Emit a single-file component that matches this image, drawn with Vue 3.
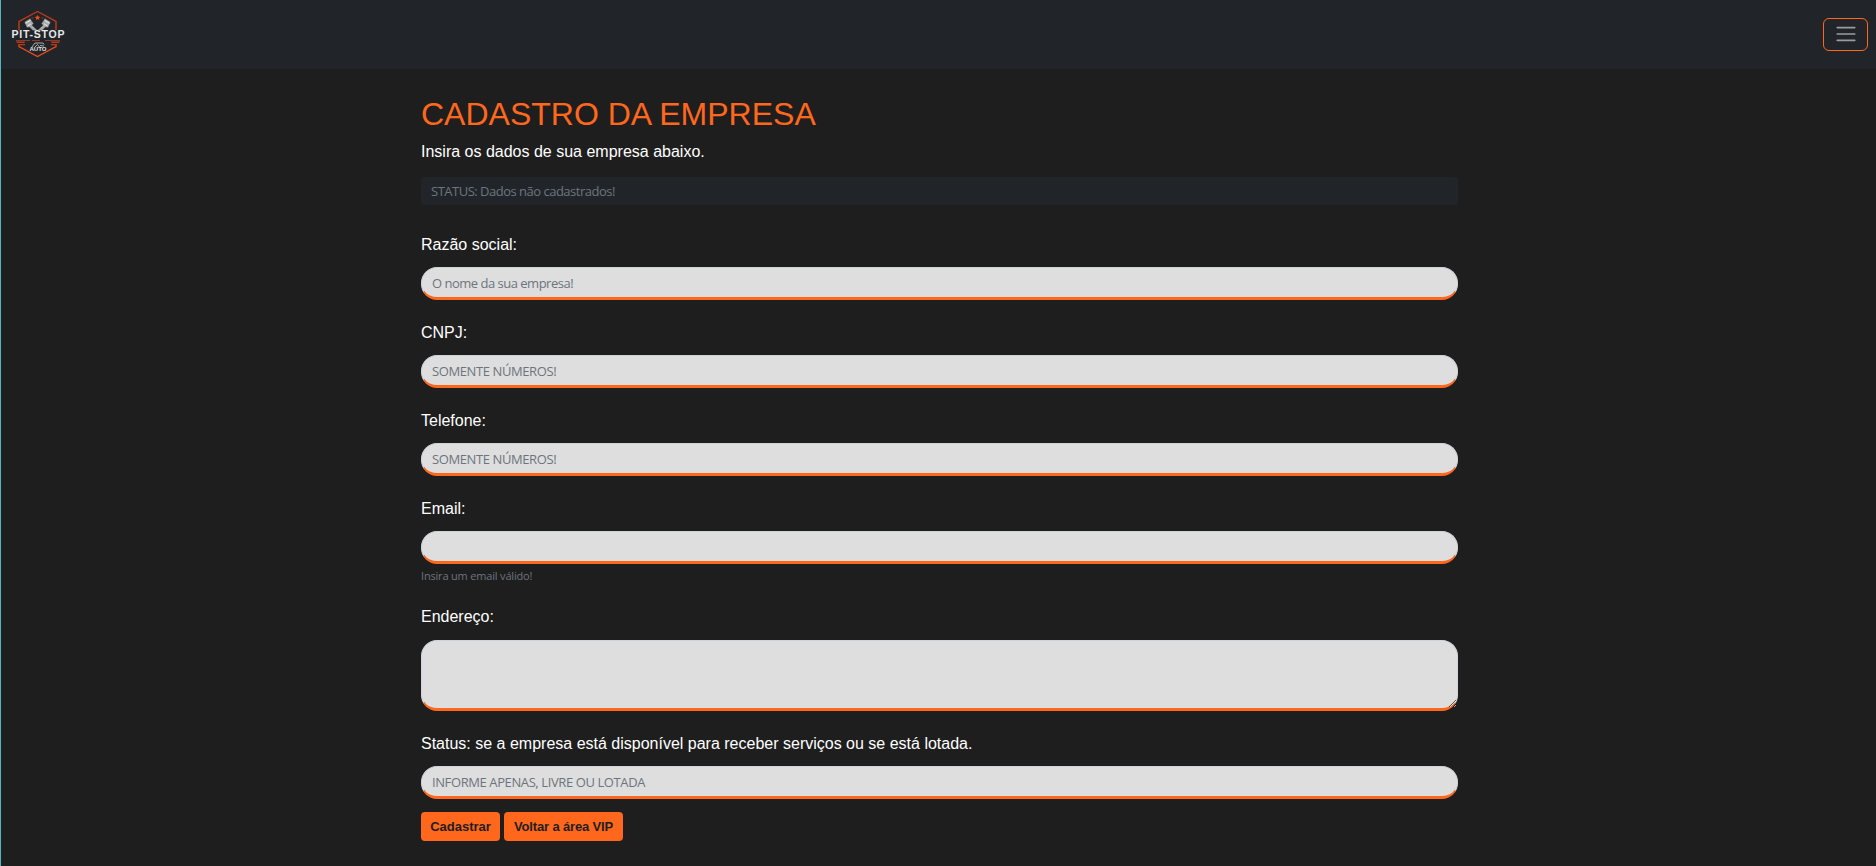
<script setup>
const fields = [
  { id: 'razao', label: 'Razão social:', placeholder: 'O nome da sua empresa!' },
  { id: 'cnpj', label: 'CNPJ:', placeholder: 'SOMENTE NÚMEROS!', caps: true },
  { id: 'telefone', label: 'Telefone:', placeholder: 'SOMENTE NÚMEROS!', caps: true },
  { id: 'email', label: 'Email:', placeholder: '', hint: 'Insira um email válido!' },
  { id: 'endereco', label: 'Endereço:', area: true },
  {
    id: 'status',
    label: 'Status: se a empresa está disponível para receber serviços ou se está lotada.',
    placeholder: 'INFORME APENAS, LIVRE OU LOTADA',
    caps: true,
  },
]
</script>

<template>
  <div class="page">
    <header class="navbar">
      <svg class="logo" viewBox="0 0 56 48" width="56" height="48">
        <defs>
          <linearGradient id="edge" x1="0" y1="0" x2="0" y2="1">
            <stop offset="0" stop-color="#b93719" />
            <stop offset="1" stop-color="#f24b1c" />
          </linearGradient>
        </defs>
        <path d="M9 20V11.500L27.500 1.500 46 11.500V20M9 34V36.500L27.500 46.500 46 36.500V34" fill="none" stroke="url(#edge)" stroke-width="1.300" />
        <path d="M27.500 5l.9 1.600 1.800.3-1.300 1.300.3 1.800-1.700-.9-1.700.9.3-1.800-1.300-1.300 1.800-.3z" fill="#e84a1f" />
        <path d="M21.500 8h2M31.500 8h2" stroke="#a83820" stroke-width="1.200" />
        <g fill="#a9aaab" stroke="#4b4c4e" stroke-width=".4">
          <path d="M14.500 12l5.500-3.500 3.500 5-1.500 1.700 5.500 5.300h-4.500l-3.500-3.500-2.500.5z" />
          <path d="M40.500 12l-5.500-3.500-3.500 5 1.500 1.700-5.500 5.300h4.500l3.500-3.500 2.500.5z" />
        </g>
        <path d="M15.500 13.300l5-3M39.500 13.300l-5-3M17.500 16l3.500-2.200M37.500 16l-3.500-2.200" stroke="#f1f1f1" stroke-width=".9" />
        <text x="1.500" y="28.300" class="brand" textLength="53" lengthAdjust="spacing">PIT-STOP</text>
        <path d="M6 30.500h14M22 30.500h8M35 30.500h15" stroke="#a33920" stroke-width=".9" />
        <path d="M6 31.500h9l-.5 1.500H7zM50 31.500h-9l.5 1.500h7.500zM9 34h6v1.300h-5zM47 34h-6v1.300h5z" fill="#b73b1b" />
        <path d="M22 37l3-4h8l1 1.500M25 37l2.500-2.500 2 2.500M30 35.500l4 .5" fill="none" stroke="#aeb0b2" stroke-width="1" />
        <text x="19.500" y="41" class="auto" textLength="17" lengthAdjust="spacingAndGlyphs">AUTO</text>
      </svg>
      <button class="toggler" type="button" aria-label="Menu">
        <svg viewBox="0 0 30 30" width="24" height="24">
          <path d="M4 7h22M4 15h22M4 23h22" stroke="rgba(255,255,255,.55)" stroke-linecap="round" stroke-miterlimit="10" stroke-width="2" />
        </svg>
      </button>
    </header>

    <main class="content">
      <h1>CADASTRO DA EMPRESA</h1>
      <p class="lead">Insira os dados de sua empresa abaixo.</p>
      <div class="status">STATUS: Dados não cadastrados!</div>

      <form @submit.prevent>
        <div v-for="f in fields" :key="f.id" class="field">
          <label :for="f.id">{{ f.label }}</label>
          <textarea v-if="f.area" :id="f.id" class="control area"></textarea>
          <input v-else :id="f.id" type="text" class="control" :class="{ caps: f.caps }" :placeholder="f.placeholder" />
          <div v-if="f.hint" class="hint">{{ f.hint }}</div>
        </div>
        <div class="actions">
          <button class="btn first" type="submit">Cadastrar</button>
          <button class="btn second" type="button">Voltar a área VIP</button>
        </div>
      </form>
    </main>
  </div>
</template>

<style>
body {
  background: #1e1e1e;
  overflow: hidden;
}
</style>

<style scoped>
* {
  box-sizing: border-box;
}
.page {
  height: 866px;
  border-left: 1px solid #58b4bc;
  background: #1e1e1e;
  font-family: "Liberation Sans", Arial, sans-serif;
  color: #fff;
}
.navbar {
  height: 69px;
  background: #212529;
  display: flex;
  justify-content: space-between;
  align-items: flex-start;
  padding: 10px 8px 0 9px;
}
.logo {
  display: block;
}
.brand {
  font: bold 10.5px "Liberation Sans", Arial, sans-serif;
  fill: #e6e7e8;
}
.auto {
  font: bold 5px "Liberation Sans", Arial, sans-serif;
  fill: #e1e2e3;
}
.toggler {
  width: 45px;
  height: 33px;
  margin-top: 8px;
  padding: 0 0 1px;
  background: transparent;
  border: 1px solid #ff671d;
  border-radius: 6px;
  display: flex;
  align-items: center;
  justify-content: center;
}
.content {
  width: 1037px;
  margin-left: 420px;
  padding-top: 26px;
}
h1 {
  margin: 0;
  height: 38px;
  font-size: 32px;
  line-height: 38px;
  font-weight: 400;
  color: #ff671d;
}
.lead {
  margin: 7px 0 13px;
  font-size: 16px;
  line-height: 24px;
}
.status {
  height: 28px;
  padding: 0 10px;
  border-radius: 4px;
  background: #212529;
  color: #6c757d;
  font: 13px/28px "Open Sans", "Noto Sans", sans-serif;
  letter-spacing: -0.5px;
}
form {
  padding-top: 4px;
}
.field {
  padding-top: 24px;
}
.field + .field {
  padding-top: 21px;
}
label {
  display: block;
  height: 24px;
  margin-bottom: 10px;
  font-size: 16px;
  line-height: 24px;
}
.control {
  display: block;
  width: 100%;
  height: 33px;
  margin: 0;
  padding: 1px 10px;
  border: 1px solid #ced4da;
  border-bottom: 3px solid #ff671d;
  border-radius: 16px;
  background: #dedede;
  outline: none;
  font: 13px "Open Sans", "Noto Sans", sans-serif;
  letter-spacing: -0.5px;
}
.control.caps {
  letter-spacing: -0.4px;
}
.control::placeholder {
  color: #6c757d;
  opacity: 1;
}
.area {
  height: 71px;
  margin-top: 11px;
  resize: vertical;
}
label:has(+ .area) {
  margin-bottom: 0;
}
.hint {
  height: 20px;
  padding-top: 3px;
  color: #6c757d;
  font: 11px/17px "Open Sans", "Noto Sans", sans-serif;
  letter-spacing: -0.18px;
}
.actions {
  display: flex;
  gap: 4px;
  margin-top: 13px;
}
.btn {
  height: 29px;
  padding: 0;
  border: 0;
  border-radius: 4px;
  background: #ff671d;
  color: #1e1e1e;
  font: bold 13px "Liberation Sans", Arial, sans-serif;
}
.first {
  width: 79px;
}
.second {
  width: 119px;
  letter-spacing: -0.15px;
}
</style>
